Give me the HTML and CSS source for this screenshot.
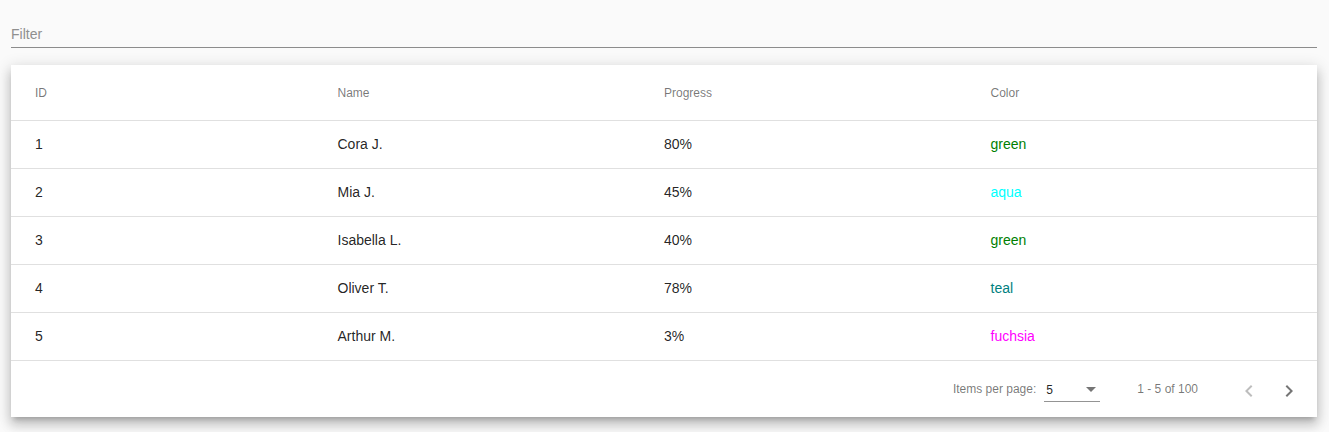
FILE: index.html
```html
<!DOCTYPE html>
<html>
<head>
<meta charset="utf-8">
<link rel="stylesheet" href="styles.css">
</head>
<body>
<div class="page">
  <div class="filter">
    <input class="filter-input" type="text" placeholder="Filter">
  </div>
  <div class="card">
    <div class="row header">
      <div class="cell">ID</div>
      <div class="cell">Name</div>
      <div class="cell">Progress</div>
      <div class="cell">Color</div>
    </div>
    <div class="row">
      <div class="cell">1</div>
      <div class="cell">Cora J.</div>
      <div class="cell">80%</div>
      <div class="cell c-green">green</div>
    </div>
    <div class="row">
      <div class="cell">2</div>
      <div class="cell">Mia J.</div>
      <div class="cell">45%</div>
      <div class="cell c-aqua">aqua</div>
    </div>
    <div class="row">
      <div class="cell">3</div>
      <div class="cell">Isabella L.</div>
      <div class="cell">40%</div>
      <div class="cell c-green">green</div>
    </div>
    <div class="row">
      <div class="cell">4</div>
      <div class="cell">Oliver T.</div>
      <div class="cell">78%</div>
      <div class="cell c-teal">teal</div>
    </div>
    <div class="row">
      <div class="cell">5</div>
      <div class="cell">Arthur M.</div>
      <div class="cell">3%</div>
      <div class="cell c-fuchsia">fuchsia</div>
    </div>
    <div class="paginator">
      <div class="page-size">
        <span class="page-size-label">Items per page:</span>
        <div class="select">
          <span class="select-value">5</span>
          <span class="select-arrow"></span>
        </div>
      </div>
      <div class="range">1 - 5 of 100</div>
      <button class="nav-btn disabled" aria-label="Previous page">
        <svg viewBox="0 0 24 24" width="24" height="24"><path d="M15.41 7.41L14 6l-6 6 6 6 1.41-1.41L10.83 12z"/></svg>
      </button>
      <button class="nav-btn" aria-label="Next page">
        <svg viewBox="0 0 24 24" width="24" height="24"><path d="M10 6L8.59 7.41 13.17 12l-4.58 4.59L10 18l6-6z"/></svg>
      </button>
    </div>
  </div>
</div>
</body>
</html>
```

FILE: styles.css
```css
* { box-sizing: border-box; }

html, body {
  margin: 0;
  padding: 0;
  background: #fafafa;
  font-family: "Liberation Sans", Arial, sans-serif;
}

.page {
  margin: 0 12px 0 11px;
  padding-bottom: 15px;
}

.filter {
  padding: 26px 0 5px 0;
  border-bottom: 1px solid #8c8c8c;
  margin-bottom: 17px;
}

.filter-input {
  display: block;
  width: 100%;
  height: 16px;
  padding: 0;
  margin: 0;
  border: none;
  outline: none;
  background: transparent;
  font-family: "Liberation Sans", Arial, sans-serif;
  font-size: 14px;
  line-height: 16px;
  color: rgba(0, 0, 0, 0.87);
}

.filter-input::placeholder {
  color: #8f8f8f;
}

.card {
  background: #fff;
  box-shadow: 0 5px 5px -3px rgba(0,0,0,.2), 0 8px 10px 1px rgba(0,0,0,.14), 0 3px 14px 2px rgba(0,0,0,.12);
}

.row {
  display: grid;
  grid-template-columns: repeat(4, 1fr);
  align-items: center;
  height: 48px;
  padding-bottom: 1px;
  border-bottom: 1px solid #e0e0e0;
  font-size: 14px;
  color: rgba(0, 0, 0, 0.87);
}

.row.header {
  height: 56px;
  padding-bottom: 0;
  font-size: 12px;
  color: rgba(0, 0, 0, 0.54);
}

.cell:first-child { padding-left: 24px; }
.cell:last-child { padding-right: 24px; }

.c-green { color: green; }
.c-aqua { color: aqua; }
.c-teal { color: teal; }
.c-fuchsia { color: fuchsia; }

.paginator {
  display: flex;
  align-items: center;
  justify-content: flex-end;
  height: 56px;
  padding: 0 8px;
  font-size: 12px;
  color: rgba(0, 0, 0, 0.54);
}

.page-size {
  display: flex;
  align-items: center;
}

.page-size-label {
  margin-right: 8px;
}

.select {
  width: 56px;
  height: 20px;
  margin-top: 6px;
  padding: 0 4px 3px 2px;
  display: flex;
  align-items: center;
  justify-content: space-between;
  border-bottom: 1px solid #949494;
  line-height: 16px;
}

.select-value {
  color: rgba(0, 0, 0, 0.87);
}

.select-arrow {
  width: 0;
  height: 0;
  border-left: 5px solid transparent;
  border-right: 5px solid transparent;
  border-top: 5px solid rgba(0, 0, 0, 0.54);
  margin-top: -1px;
}

.range {
  margin: 0 31px 0 37px;
}

.nav-btn {
  width: 40px;
  height: 40px;
  padding: 0;
  margin: 0;
  border: none;
  background: transparent;
  display: flex;
  align-items: center;
  justify-content: center;
  margin-top: 3px;
  fill: rgba(0, 0, 0, 0.54);
}

.nav-btn.disabled {
  fill: rgba(0, 0, 0, 0.26);
}
```
